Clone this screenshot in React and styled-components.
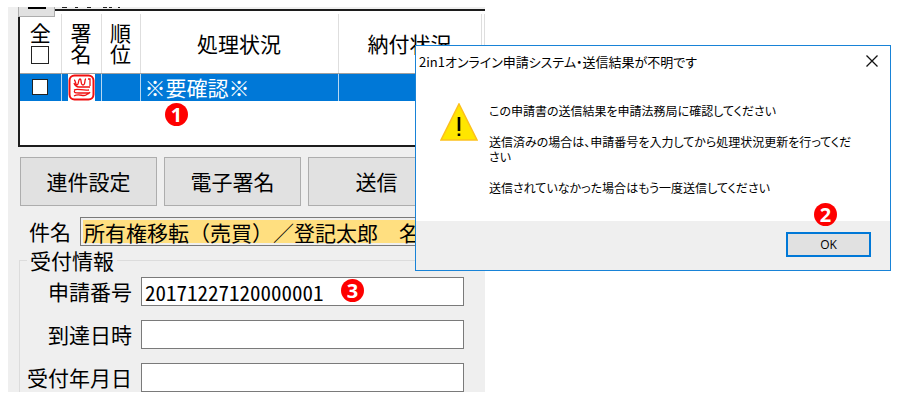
import React, { useState } from "react";
import styled, { createGlobalStyle } from "styled-components";

const GlobalStyle = createGlobalStyle`
  * {
    box-sizing: border-box;
  }
  body {
    margin: 0;
    background: #ffffff;
    color: #000000;
    font-family: "Noto Sans CJK JP", sans-serif;
    font-size: 21px;
    line-height: 21px;
  }
  button, input {
    font: inherit;
    color: inherit;
  }
`;

const Page = styled.main`
  position: relative;
  display: grid;
  grid-template-columns: 54% 1fr;
  padding: 7px 9px 8px 8px;
`;

const Panel = styled.section`
  position: relative;
  background: #efefef;
  padding-top: 2px;
  overflow: hidden;
`;

const ToolStrip = styled.div`
  position: absolute;
  top: 0;
  left: 10px;
  display: flex;
  align-items: flex-start;
  gap: 6px;
`;

const CollapseButton = styled.button`
  display: flex;
  justify-content: center;
  width: 37px;
  height: 10px;
  padding: 0;
  background: #e1e1e1;
  border: 1px solid #adadad;
  border-top: none;
`;

const ListBox = styled.div`
  height: 138px;
  margin-left: 10px;
  padding-top: 3px;
  background: #ffffff;
  border: 2px solid #1c1c1c;
  border-right: none;
`;

const List = styled.table`
  width: 100%;
  table-layout: fixed;
  border-collapse: collapse;
`;

const HeadCell = styled.th`
  width: ${({ $width }) => $width || "auto"};
  height: 59px;
  padding: 0;
  font-weight: 400;
  border-right: 1px solid #dedede;
  border-bottom: 1px solid #a0a0a0;
`;

const SelectAll = styled.div`
  display: flex;
  flex-direction: column;
  align-items: center;
  gap: 3px;
`;

const Cell = styled.td`
  height: 27px;
  padding: 0 0 0 ${({ $indent }) => $indent || "0"};
  text-align: ${({ $indent }) => ($indent ? "left" : "center")};
  color: #ffffff;
  background: #0078d7;
  border-right: 1px solid #b8d8f2;
`;

const Check = styled.input.attrs({ type: "checkbox" })`
  appearance: none;
  display: block;
  width: ${({ $size }) => $size};
  height: ${({ $size }) => $size};
  margin: 0 auto;
  background: #ffffff;
  border: 1px solid #222222;
  &:checked {
    box-shadow: inset 0 0 0 3px #ffffff;
    background: #222222;
  }
`;

const Stamp = styled.svg`
  display: block;
  margin: 0 auto;
`;

const Actions = styled.div`
  display: flex;
  gap: 7px;
  padding: 10px 0 11px 12px;
`;

const ActionButton = styled.button`
  width: 137px;
  height: 49px;
  padding: 0;
  background: #e1e1e1;
  border: 1px solid #adadad;
`;

const Field = styled.div`
  display: grid;
  grid-template-columns: ${({ $label }) => $label} 1fr;
  align-items: center;
  column-gap: 9px;
  padding-right: 21px;
`;

const Label = styled.label`
  text-align: right;
  white-space: nowrap;
`;

const TextBox = styled.input.attrs({ type: "text" })`
  width: 100%;
  height: 29px;
  padding: 2px;
  font-feature-settings: ${({ $half }) => ($half ? '"hwid"' : "normal")};
  text-indent: 1px;
  border: 1px solid #7a7a7a;
  background: ${({ $fill }) => $fill || "#ffffff"};
  background-clip: ${({ $fill }) => ($fill ? "content-box" : "border-box")};
  outline: none;
`;

const Reception = styled.fieldset`
  display: flex;
  flex-direction: column;
  gap: 14px;
  height: 142px;
  min-width: 0;
  margin: 4px 0 0 11px;
  padding: 6px 0 0;
  border: 1px solid #dcdcdc;
  border-right: none;
  border-bottom: none;
`;

const Legend = styled.legend`
  margin-left: 7px;
  padding: 0 3px;
`;

const Dialog = styled.section`
  position: absolute;
  top: 45px;
  left: 415px;
  right: 9px;
  background: #ffffff;
  border: 1px solid #1883d7;
  font-size: 12px;
  line-height: 15px;
  font-feature-settings: "palt";
`;

const TitleBar = styled.header`
  display: flex;
  align-items: center;
  justify-content: space-between;
  height: 30px;
  padding: 0 11px 0 3px;
`;

const Title = styled.h1`
  margin: 0;
  font-size: 13px;
  font-weight: 400;
`;

const CloseButton = styled.button`
  display: flex;
  padding: 0;
  background: none;
  border: none;
`;

const Message = styled.div`
  display: flex;
  gap: 11px;
  height: 145px;
  padding: 27px 24px 0;
`;

const Lines = styled.div`
  display: flex;
  flex-direction: column;
  gap: 16px;
  p {
    margin: 0;
  }
`;

const Footer = styled.footer`
  display: flex;
  justify-content: flex-end;
  padding: 11px 19px 13px;
  background: #efefef;
`;

const OkButton = styled.button`
  width: 85px;
  height: 25px;
  padding: 0;
  font-family: "Open Sans", sans-serif;
  background: #e1e1e1;
  border: 2px solid #0078d7;
`;

const Badge = styled.span`
  position: absolute;
  top: ${({ $top }) => $top};
  left: ${({ $left }) => $left};
  display: flex;
  align-items: center;
  justify-content: center;
  width: 23px;
  height: 23px;
  font-family: "Open Sans", sans-serif;
  font-size: 20px;
  font-weight: 700;
  color: #ffffff;
  background: #fe0000;
  border-radius: 50%;
`;

const actions = ["連件設定", "電子署名", "送信"];

const App = () => {
  const [values, setValues] = useState({
    name: "所有権移転（売買）／登記太郎　名",
    number: "20171227120000001",
    arrival: "",
    date: "",
  });
  const onChange = (e) => {
    setValues({ ...values, [e.target.id]: e.target.value });
  };
  const fields = [
    { id: "number", label: "申請番号" },
    { id: "arrival", label: "到達日時" },
    { id: "date", label: "受付年月日" },
  ];

  return (
    <>
      <GlobalStyle />
      <Page>
        <Panel>
          <ListBox>
            <List>
              <thead>
                <tr>
                  <HeadCell $width="41px">
                    <SelectAll>
                      <label htmlFor="all">全</label>
                      <Check id="all" $size="18px" />
                    </SelectAll>
                  </HeadCell>
                  <HeadCell $width="40px">署<br />名</HeadCell>
                  <HeadCell $width="39px">順<br />位</HeadCell>
                  <HeadCell $width="198px">処理状況</HeadCell>
                  <HeadCell $width="143px">納付状況</HeadCell>
                  <HeadCell />
                </tr>
              </thead>
              <tbody>
                <tr>
                  <Cell><Check aria-label="選択" $size="16px" /></Cell>
                  <Cell>
                    <Stamp width="27" height="27" viewBox="0 0 27 27" fill="none" stroke="#f01010">
                      <rect width="27" height="27" fill="#ffffff" stroke="none" />
                      <rect x="1.5" y="1.5" width="24" height="24" rx="5" strokeWidth="2" />
                      <path d="M6 6c2 0 1 5 3 5s1-6 3-6 0 6 3 6 1-6 3-6M6 9c1 3 2 4 5 4h11M20 5h2v7M6 16c4-2 8 1 15 0M7 16c-2 3 1 3 4 3h10M6 22c5-3 9 1 12-1s3-1 4-3" strokeWidth="1.3" />
                    </Stamp>
                  </Cell>
                  <Cell />
                  <Cell $indent="4px">※要確認※</Cell>
                  <Cell />
                  <Cell />
                </tr>
              </tbody>
            </List>
          </ListBox>
          <ToolStrip>
            <CollapseButton aria-label="−">
              <svg width="18" height="3"><path d="M0 1h18" stroke="#000" strokeWidth="2" /></svg>
            </CollapseButton>
            <svg width="62" height="2" fill="#222222">
              <path d="M1 0h5v1h-5zM14 0h3v1h-3zM26 0h4v1h-4zM42 0h4v1h-4zM48 0h3v1h-3zM57 0h2v1h-2z" />
            </svg>
          </ToolStrip>
          <Actions>
            {actions.map((label) => (
              <ActionButton key={label}>{label}</ActionButton>
            ))}
          </Actions>
          <Field $label="63px">
            <Label htmlFor="name">件名</Label>
            <TextBox id="name" $fill="#ffdf80" value={values.name} onChange={onChange} />
          </Field>
          <Reception>
            <Legend>受付情報</Legend>
            {fields.map((field) => (
              <Field key={field.id} $label="112px">
                <Label htmlFor={field.id}>{field.label}</Label>
                <TextBox id={field.id} $half value={values[field.id]} onChange={onChange} />
              </Field>
            ))}
          </Reception>
        </Panel>

        <Dialog role="dialog" aria-labelledby="title">
          <TitleBar>
            <Title id="title">2in1オンライン申請システム・送信結果が不明です</Title>
            <CloseButton aria-label="閉じる">
              <svg width="14" height="14" stroke="#111111" fill="none">
                <path d="M1.5 1.5l11 11M12.5 1.5l-11 11" strokeWidth="1.3" />
              </svg>
            </CloseButton>
          </TitleBar>
          <Message>
            <svg width="38" height="38" viewBox="0 0 38 38">
              <path d="M19 1L37 37H1z" fill="#ffe600" stroke="#fdc11c" strokeWidth="1.6" />
              <path d="M19 14v14M19 30.5v2.5" stroke="#000000" strokeWidth="2.6" />
            </svg>
            <Lines>
              <p>この申請書の送信結果を申請法務局に確認してください</p>
              <p>送信済みの場合は、申請番号を入力してから処理状況更新を行ってくだ<br />さい</p>
              <p>送信されていなかった場合はもう一度送信してください</p>
            </Lines>
          </Message>
          <Footer>
            <OkButton>OK</OkButton>
          </Footer>
        </Dialog>

        <Badge $top="103px" $left="165px">1</Badge>
        <Badge $top="203px" $left="814px">2</Badge>
        <Badge $top="279px" $left="341px">3</Badge>
      </Page>
    </>
  );
};

export default App;
